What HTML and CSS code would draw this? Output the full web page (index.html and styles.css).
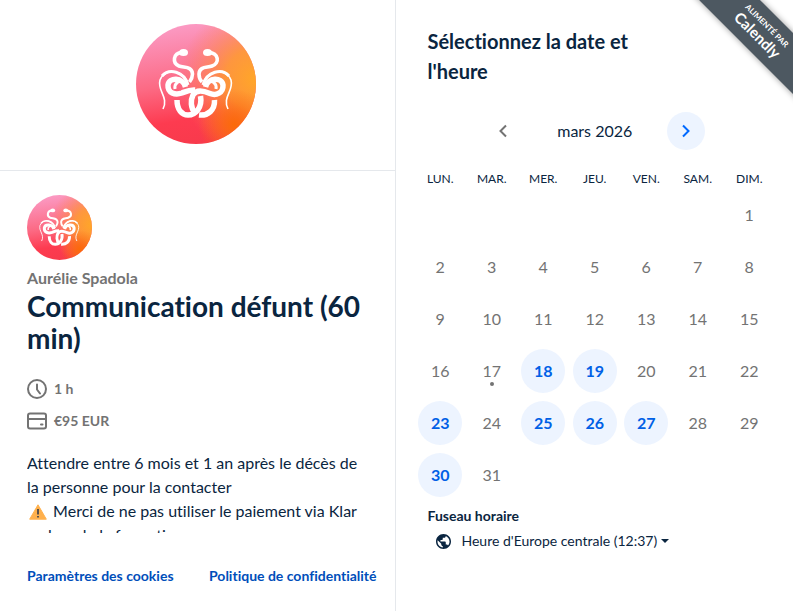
FILE: index.html
```html
<!DOCTYPE html>
<html lang="fr">
<head>
  <meta charset="UTF-8">
  <meta name="viewport" content="width=device-width, initial-scale=1">
  <title>Communication défunt (60 min) - Aurélie Spadola</title>
  <link rel="stylesheet" href="styles.css">
</head>
<body>
  <svg class="defs" aria-hidden="true">
    <defs>
      <linearGradient id="base" x1="0.3" y1="0" x2="0.45" y2="1">
        <stop offset="0" stop-color="#fb9cc6"/>
        <stop offset="0.5" stop-color="#fc6a84"/>
        <stop offset="0.8" stop-color="#fd3b50"/>
        <stop offset="1" stop-color="#f83a4c"/>
      </linearGradient>
      <radialGradient id="glow" cx="1" cy="0.46" r="0.64">
        <stop offset="0" stop-color="#ffa728"/>
        <stop offset="0.4" stop-color="#fe9a35" stop-opacity="0.9"/>
        <stop offset="1" stop-color="#fd7a58" stop-opacity="0"/>
      </radialGradient>
      <radialGradient id="ember" cx="0.82" cy="0.84" r="0.3">
        <stop offset="0" stop-color="#fb6a08"/>
        <stop offset="1" stop-color="#fb6a08" stop-opacity="0"/>
      </radialGradient>
    </defs>
    <symbol id="snakes" viewBox="0 0 120 120">
      <circle cx="60" cy="60" r="60" fill="url(#base)"/>
      <circle cx="60" cy="60" r="60" fill="url(#glow)"/>
      <circle cx="60" cy="60" r="60" fill="url(#ember)"/>
      <g fill="none" stroke="#fff">
        <!-- necks -->
        <path d="M46 28.500C37 29 36 39 43 42C48 44 56 42 56.500 50C56.500 53 55 56 53.500 58" stroke-width="3.600"/>
        <path d="M72.500 28.500C83 29 84 39 76 42C71 44 63.500 42 63 50C63 53 64 56 66 58" stroke-width="3.600"/>
        <!-- tails -->
        <path d="M52 60C48 46 29 43 24 56C21 67 33 73 27 85" stroke-width="1.600"/>
        <path d="M52 61C48 47 33 44 26 52" stroke-width="3"/>
        <path d="M67 60C71 46 90 43 95 56C98 67 86 73 92 85" stroke-width="1.600"/>
        <path d="M67 61C71 47 86 44 93 52" stroke-width="3"/>
        <!-- coils -->
        <path d="M49.500 63C47 53 33 53 32 61C31.500 69 39 71.500 46 69C51 67 54 65.500 59 66" stroke-width="5.500"/>
        <path d="M48 58C43 56 38 59 39 65" stroke-width="3"/>
        <path d="M69.500 63C72 53 86 53 87 61C87.500 69 80 72 74 69.500C66 66 60 65.500 57 71C54.500 76 54.500 84 59 89" stroke-width="5.500"/>
        <path d="M71 58C76 56 81 59 80 65" stroke-width="3"/>
        <!-- lower rings -->
        <path d="M41 76C41 86 46 91 52 91C60 91 66.500 83 64.500 72" stroke-width="5.500"/>
        <path d="M63 91C72 92 79 86 78.500 76" stroke-width="5.500"/>
      </g>
      <ellipse cx="47.500" cy="28.500" rx="4.500" ry="3.500" fill="#fff"/>
      <ellipse cx="71.500" cy="28.500" rx="4.500" ry="3.500" fill="#fff"/>
    </symbol>
  </svg>

  <main class="booking">
    <section class="details">
      <div class="brand">
        <svg class="brand-logo" role="img" aria-label="Aurélie Spadola"><use href="#snakes"/></svg>
      </div>
      <div class="profile">
        <svg class="avatar" aria-hidden="true"><use href="#snakes"/></svg>
        <p class="host">Aurélie Spadola</p>
        <h1>Communication défunt (60 min)</h1>
        <ul class="facts">
          <li>
            <svg class="fact-icon" viewBox="0 0 20 20" aria-hidden="true"><circle cx="10" cy="10" r="9"/><path d="M10 5.500V10.500L13 14.500"/></svg>
            1 h
          </li>
          <li>
            <svg class="fact-icon" viewBox="0 0 20 20" aria-hidden="true"><rect x="1" y="2.500" width="18" height="15" rx="2"/><path d="M1 8H19M14 13.500H15.500"/></svg>
            €95 EUR
          </li>
        </ul>
        <div class="description">
          Attendre entre 6 mois et 1 an après le décès de la personne pour la contacter<br>
          <svg class="warning" viewBox="0 0 18 16" role="img" aria-label="Attention"><path d="M9 .8L17.300 15.200H.7Z" fill="#ffb04c" stroke="#ffb04c" stroke-linejoin="round"/><path d="M9 5V10.500M9 12V13.500" stroke="#5b5048" stroke-width="2"/></svg>
          Merci de ne pas utiliser le paiement via Klar<br>na lors de la formation
        </div>
      </div>
      <footer class="links">
        <button type="button" class="link">Paramètres des cookies</button>
        <a class="link" href="#">Politique de confidentialité</a>
      </footer>
    </section>

    <section class="picker">
      <h2>Sélectionnez la date et l'heure</h2>
      <div class="month">
        <button type="button" class="arrow" aria-label="Mois précédent" disabled><svg viewBox="0 0 10 14"><path d="M8 1.500L2.500 7L8 12.500"/></svg></button>
        <span class="month-name">mars 2026</span>
        <button type="button" class="arrow next" aria-label="Mois suivant"><svg viewBox="0 0 10 14"><path d="M2 1.500L7.500 7L2 12.500"/></svg></button>
      </div>
      <table class="calendar">
        <thead>
          <tr><th>LUN.</th><th>MAR.</th><th>MER.</th><th>JEU.</th><th>VEN.</th><th>SAM.</th><th>DIM.</th></tr>
        </thead>
        <tbody>
          <tr><td></td><td></td><td></td><td></td><td></td><td></td><td><button disabled>1</button></td></tr>
          <tr><td><button disabled>2</button></td><td><button disabled>3</button></td><td><button disabled>4</button></td><td><button disabled>5</button></td><td><button disabled>6</button></td><td><button disabled>7</button></td><td><button disabled>8</button></td></tr>
          <tr><td><button disabled>9</button></td><td><button disabled>10</button></td><td><button disabled>11</button></td><td><button disabled>12</button></td><td><button disabled>13</button></td><td><button disabled>14</button></td><td><button disabled>15</button></td></tr>
          <tr><td><button disabled>16</button></td><td><button class="today" disabled>17</button></td><td><button>18</button></td><td><button>19</button></td><td><button disabled>20</button></td><td><button disabled>21</button></td><td><button disabled>22</button></td></tr>
          <tr><td><button>23</button></td><td><button disabled>24</button></td><td><button>25</button></td><td><button>26</button></td><td><button>27</button></td><td><button disabled>28</button></td><td><button disabled>29</button></td></tr>
          <tr><td><button>30</button></td><td><button disabled>31</button></td><td></td><td></td><td></td><td></td><td></td></tr>
        </tbody>
      </table>
      <h3 id="tz-label">Fuseau horaire</h3>
      <button type="button" class="timezone" aria-labelledby="tz-label tz-value">
        <svg class="globe" viewBox="2 2 20 20" aria-hidden="true"><path d="M12 2C6.480 2 2 6.480 2 12s4.480 10 10 10 10-4.480 10-10S17.520 2 12 2zm-1 17.930c-3.950-.49-7-3.850-7-7.930 0-.62.080-1.210.21-1.790L9 15v1c0 1.100.9 2 2 2v1.930zm6.900-2.540c-.26-.81-1-1.390-1.900-1.390h-1v-3c0-.55-.45-1-1-1H8v-2h2c.55 0 1-.45 1-1V7h2c1.100 0 2-.9 2-2v-.41c2.930 1.190 5 4.060 5 7.410 0 2.080-.8 3.970-2.100 5.390z"/></svg>
        <span id="tz-value">Heure d'Europe centrale (12:37)</span>
        <span class="caret"></span>
      </button>
    </section>

    <div class="badge">
      <a class="ribbon" href="#"><small>ALIMENTÉ PAR</small><span>Calendly</span></a>
    </div>
  </main>
</body>
</html>
```
FILE: styles.css
```css
* { box-sizing: border-box; }
body { margin: 0; font-family: Lato, "Liberation Sans", sans-serif; font-size: 16px; line-height: 24px; font-variant-ligatures: none; color: #0a2540; background: #fff; }
h1, h2, h3, p, ul { margin: 0; padding: 0; }
button { font: inherit; font-variant-ligatures: none; color: inherit; background: none; border: none; padding: 0; cursor: pointer; }
svg { display: block; }
.defs { position: absolute; width: 0; height: 0; }

.booking { position: relative; display: grid; grid-template-columns: calc(50% - 1px) 1fr; min-height: 100vh; overflow: hidden; }

.details { display: flex; flex-direction: column; border-right: 1px solid #e5e8ec; }
.brand { display: flex; justify-content: center; padding: 24px 3px 26px 0; border-bottom: 1px solid #e5e8ec; }
.brand-logo { width: 120px; height: 120px; }
.profile { padding: 24px 27px 0; }
.avatar { width: 65px; height: 65px; }
.host { margin-top: 6px; color: #737373; font-weight: bold; }
h1 { font-size: 28px; line-height: 32px; }
.facts { list-style: none; display: grid; gap: 8px; margin-top: 23px; color: #737373; font-size: 14px; font-weight: bold; }
.facts li { display: flex; align-items: center; gap: 7px; }
.fact-icon { width: 20px; height: 20px; fill: none; stroke: #737373; stroke-width: 2; stroke-linecap: round; }
.description { height: 82px; margin-top: 18px; overflow: hidden; }
.warning { display: inline-block; width: 18px; height: 16px; margin: 0 2px; vertical-align: -3px; }
.links { display: flex; justify-content: space-between; margin-top: auto; padding: 0 18px 23px 27px; }
.link { color: #004eba; font-size: 14px; line-height: 24px; font-weight: bold; text-decoration: none; }

.picker { padding: 26px 18px 24px 19px; }
h2 { max-width: 260px; padding-left: 13px; font-size: 20px; line-height: 30px; }
.month { display: flex; align-items: center; justify-content: center; gap: 35px; margin-top: 26px; }
.arrow { display: grid; place-items: center; width: 38px; height: 38px; border-radius: 50%; }
.arrow svg { width: 10px; height: 14px; fill: none; stroke: #737373; stroke-width: 2; }
.next { background: #edf4ff; }
.next svg { stroke: #0069ff; }

.calendar { width: 100%; margin-top: 18px; table-layout: fixed; border-collapse: collapse; }
th { height: 21px; padding: 0; font-size: 12px; line-height: 21px; font-weight: normal; }
td { height: 52px; padding: 0; text-align: center; }
td button { position: relative; width: 44px; height: 44px; border-radius: 50%; background: #edf4ff; color: #0060e6; font-weight: bold; }
td button:disabled { background: none; color: #737373; font-weight: normal; cursor: default; }
.today::after { content: ""; position: absolute; left: 20px; bottom: 7px; width: 4px; height: 4px; border-radius: 50%; background: #737373; }

h3 { margin-top: 3px; padding-left: 13px; font-size: 14px; line-height: 24px; }
.timezone { display: flex; align-items: center; margin: 1px 0 0 21px; font-size: 14px; line-height: 24px; }
.globe { width: 15px; height: 15px; margin-right: 11px; fill: #0a2540; }
.caret { margin-left: 4px; border: 4px solid transparent; border-top-color: #0a2540; border-bottom: 0; }

.badge { position: absolute; top: 0; right: 0; width: 120px; height: 120px; overflow: hidden; }
.ribbon { position: absolute; top: 10px; right: -48px; display: flex; flex-direction: column; align-items: center; width: 160px; height: 43px; padding-top: 8px; transform: rotate(45deg); background: #4d5861; color: #fff; font-weight: bold; text-decoration: none; box-shadow: 0 0 6px rgba(0, 0, 0, 0.4); }
.ribbon small { font-size: 8px; line-height: 10px; }
.ribbon span { font-size: 15px; line-height: 16px; }
```
